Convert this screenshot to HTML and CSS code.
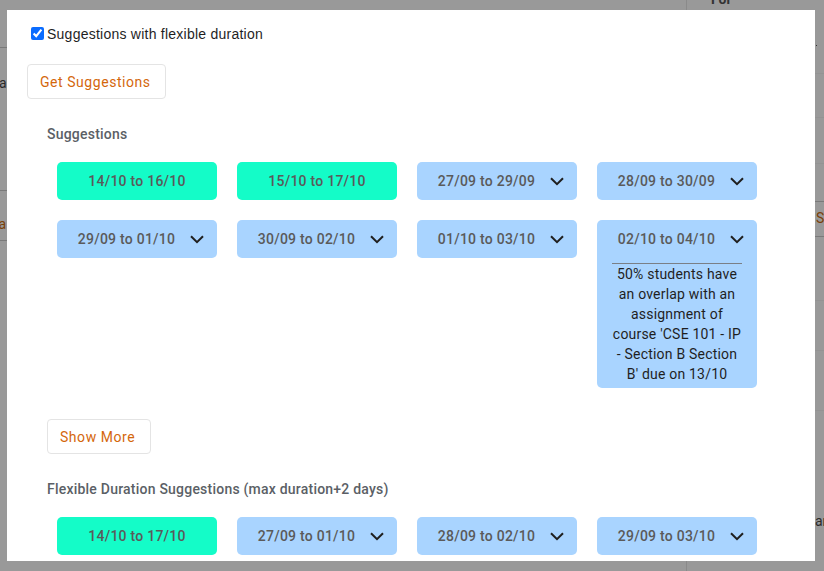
FILE: index.html
```html
<!DOCTYPE html>
<html>
<head>
<meta charset="utf-8">
<link rel="stylesheet" href="styles.css">
</head>
<body>
<div class="backdrop">
  <div class="bg-vline bg-vline-top"></div>
  <div class="bg-vline bg-vline-bottom"></div>
  <span class="bg-text bg-for">For</span>
  <div class="bg-hline" style="left:0;width:7px;top:47px"></div>
  <div class="bg-hline" style="left:0;width:7px;top:190px"></div>
  <div class="bg-hline" style="left:0;width:7px;top:240px"></div>
  <span class="bg-text bg-a">a</span>
  <span class="bg-text bg-ea">ea</span>
  <div class="bg-hline faint" style="left:815px;width:9px;top:73px"></div>
  <div class="bg-hline faint" style="left:815px;width:9px;top:117px"></div>
  <div class="bg-hline faint" style="left:815px;width:9px;top:163px"></div>
  <div class="bg-hline" style="left:815px;width:9px;top:201px"></div>
  <div class="bg-hline" style="left:815px;width:9px;top:236px"></div>
  <div class="bg-hline faint" style="left:815px;width:9px;top:300px"></div>
  <div class="bg-hline faint" style="left:815px;width:9px;top:350px"></div>
  <div class="bg-hline faint" style="left:815px;width:9px;top:410px"></div>
  <span class="bg-text bg-s">S</span>
  <span class="bg-text bg-ar">ar</span>
  <span class="bg-dot"></span>
</div>

<div class="modal">
  <label class="check-row">
    <input type="checkbox" checked class="check">
    <span>Suggestions with flexible duration</span>
  </label>

  <button class="btn">Get Suggestions</button>

  <section class="section">
    <h3 class="heading">Suggestions</h3>
    <div class="grid">
      <div class="chip green"><div class="chip-head"><span>14/10 to 16/10</span></div></div>
      <div class="chip green"><div class="chip-head"><span>15/10 to 17/10</span></div></div>
      <div class="chip blue"><div class="chip-head drop"><span>27/09 to 29/09</span><svg class="chev" width="14" height="9" viewBox="0 0 14 9"><path d="M1 1.2 L7 7.2 L13 1.2" fill="none" stroke="#1f1f1f" stroke-width="2"/></svg></div></div>
      <div class="chip blue"><div class="chip-head drop"><span>28/09 to 30/09</span><svg class="chev" width="14" height="9" viewBox="0 0 14 9"><path d="M1 1.2 L7 7.2 L13 1.2" fill="none" stroke="#1f1f1f" stroke-width="2"/></svg></div></div>
      <div class="chip blue"><div class="chip-head drop"><span>29/09 to 01/10</span><svg class="chev" width="14" height="9" viewBox="0 0 14 9"><path d="M1 1.2 L7 7.2 L13 1.2" fill="none" stroke="#1f1f1f" stroke-width="2"/></svg></div></div>
      <div class="chip blue"><div class="chip-head drop"><span>30/09 to 02/10</span><svg class="chev" width="14" height="9" viewBox="0 0 14 9"><path d="M1 1.2 L7 7.2 L13 1.2" fill="none" stroke="#1f1f1f" stroke-width="2"/></svg></div></div>
      <div class="chip blue"><div class="chip-head drop"><span>01/10 to 03/10</span><svg class="chev" width="14" height="9" viewBox="0 0 14 9"><path d="M1 1.2 L7 7.2 L13 1.2" fill="none" stroke="#1f1f1f" stroke-width="2"/></svg></div></div>
      <div class="chip blue open">
        <div class="chip-head drop"><span>02/10 to 04/10</span><svg class="chev" width="14" height="9" viewBox="0 0 14 9"><path d="M1 1.2 L7 7.2 L13 1.2" fill="none" stroke="#1f1f1f" stroke-width="2"/></svg></div>
        <div class="chip-detail">50% students have an overlap with an assignment of course 'CSE 101 - IP - Section B Section B' due on 13/10</div>
      </div>
    </div>

    <button class="btn btn-more">Show More</button>

    <h3 class="heading">Flexible Duration Suggestions (max duration+2 days)</h3>
    <div class="grid">
      <div class="chip green"><div class="chip-head"><span>14/10 to 17/10</span></div></div>
      <div class="chip blue"><div class="chip-head drop"><span>27/09 to 01/10</span><svg class="chev" width="14" height="9" viewBox="0 0 14 9"><path d="M1 1.2 L7 7.2 L13 1.2" fill="none" stroke="#1f1f1f" stroke-width="2"/></svg></div></div>
      <div class="chip blue"><div class="chip-head drop"><span>28/09 to 02/10</span><svg class="chev" width="14" height="9" viewBox="0 0 14 9"><path d="M1 1.2 L7 7.2 L13 1.2" fill="none" stroke="#1f1f1f" stroke-width="2"/></svg></div></div>
      <div class="chip blue"><div class="chip-head drop"><span>29/09 to 03/10</span><svg class="chev" width="14" height="9" viewBox="0 0 14 9"><path d="M1 1.2 L7 7.2 L13 1.2" fill="none" stroke="#1f1f1f" stroke-width="2"/></svg></div></div>
    </div>
  </section>
</div>
</body>
</html>
```

FILE: styles.css
```css
html, body {
  margin: 0;
  padding: 0;
}
body {
  width: 824px;
  height: 571px;
  overflow: hidden;
  background: #999999;
  font-family: Roboto, "Liberation Sans", sans-serif;
  position: relative;
}

/* dimmed page behind the overlay */
.backdrop {
  position: absolute;
  inset: 0;
  background: #999999;
}
.bg-hline {
  position: absolute;
  height: 1px;
  background: #7a7a7a;
}
.bg-hline.faint {
  background: #939393;
}
.bg-vline {
  position: absolute;
  left: 686px;
  width: 1px;
  background: #8a8a8a;
}
.bg-vline-top { top: 0; height: 10px; }
.bg-vline-bottom { top: 561px; height: 10px; }
.bg-text {
  position: absolute;
  font-size: 14px;
  line-height: 16px;
  color: #2a2a2a;
}
.bg-for { left: 711px; top: -9px; font-weight: 700; color: #333; }
.bg-a { left: -1px; top: 75px; }
.bg-ea { left: -9px; top: 216px; color: #7a3f08; }
.bg-s { left: 816px; top: 210px; color: #7a3f08; }
.bg-ar { left: 815px; top: 513px; }
.bg-dot {
  position: absolute;
  left: 816px;
  top: 45px;
  width: 1px;
  height: 1px;
  background: #333;
}

/* modal */
.modal {
  position: absolute;
  left: 7px;
  top: 10px;
  width: 808px;
  height: 551px;
  background: #ffffff;
  overflow: hidden;
  box-sizing: border-box;
  padding: 13px 20px 0 20px;
  display: flex;
  flex-direction: column;
  align-items: flex-start;
}

.check-row {
  display: flex;
  align-items: center;
  height: 21px;
  font-family: "Liberation Sans", Arial, sans-serif;
  font-size: 14px;
  letter-spacing: 0.24px;
  color: #1f1f1f;
}
.check {
  width: 13px;
  height: 13px;
  margin: 0 3px 0 4px;
  accent-color: #0a6cff;
}

.btn {
  margin-top: 20px;
  height: 35px;
  padding: 0 14px 0 12px;
  background: #ffffff;
  border: 1px solid #e4e4e4;
  border-radius: 4px;
  font-family: Roboto, "Liberation Sans", sans-serif;
  font-size: 14px;
  color: #d4670c;
  letter-spacing: 0.55px;
}

.section {
  margin-left: 20px;
  display: flex;
  flex-direction: column;
  align-items: flex-start;
}

.heading {
  margin: 25px 0 0 0;
  font-size: 14px;
  line-height: 20px;
  font-weight: 500;
  letter-spacing: 0.22px;
  color: #5b5f66;
}

.grid {
  margin: 18px 0 0 10px;
  display: grid;
  grid-template-columns: repeat(4, 160px);
  column-gap: 20px;
  row-gap: 20px;
  align-items: start;
}

.chip {
  border-radius: 5px;
  color: #5a5a5a;
  font-size: 14px;
  font-weight: 500;
  letter-spacing: 0.25px;
}
.chip.green { background: #14fcc8; }
.chip.blue { background: #a9d4ff; }

.chip-head {
  height: 38px;
  display: flex;
  align-items: center;
  justify-content: center;
}
.chip-head.drop {
  padding-left: 8px;
  gap: 15px;
}
.chev {
  display: block;
  margin-top: 1px;
}

.chip-detail {
  margin: 5px 15px 0 15px;
  padding-bottom: 4px;
  border-top: 1px solid #7a7f86;
  font-weight: 400;
  color: #1f1f1f;
  letter-spacing: 0.2px;
  line-height: 20px;
  text-align: center;
}

.btn-more {
  margin-top: 31px;
  padding: 0 15px 0 12px;
}
```
